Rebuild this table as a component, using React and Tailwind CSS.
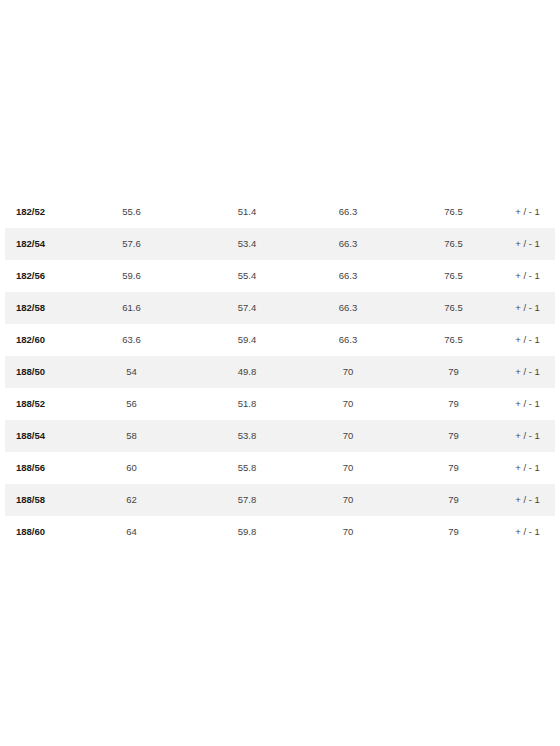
export default function App() {
  const rows = [
    ["182/52", "55.6", "51.4", "66.3", "76.5"],
    ["182/54", "57.6", "53.4", "66.3", "76.5"],
    ["182/56", "59.6", "55.4", "66.3", "76.5"],
    ["182/58", "61.6", "57.4", "66.3", "76.5"],
    ["182/60", "63.6", "59.4", "66.3", "76.5"],
    ["188/50", "54", "49.8", "70", "79"],
    ["188/52", "56", "51.8", "70", "79"],
    ["188/54", "58", "53.8", "70", "79"],
    ["188/56", "60", "55.8", "70", "79"],
    ["188/58", "62", "57.8", "70", "79"],
    ["188/60", "64", "59.8", "70", "79"],
  ];
  return (
    <div className="w-[560px] h-[746px] bg-white pt-[196px] px-[5px]" style={{ fontFamily: '"Liberation Sans", Arial, sans-serif' }}>
      <div className="flex flex-col">
        {rows.map((r, i) => (
          <div
            key={i}
            className={`grid grid-cols-[53px_147px_84px_118px_93px_55px] h-[32px] items-center pt-[1px] text-[9.5px] text-[#444] ${i % 2 === 1 ? "bg-[#f2f2f2]" : "bg-white"}`}
          >
            <div className="pl-[11px] font-bold text-[#1a1a1a]">{r[0]}</div>
            <div className="text-center">{r[1]}</div>
            <div className="text-center">{r[2]}</div>
            <div className="text-center">{r[3]}</div>
            <div className="text-center">{r[4]}</div>
            <div className="text-center whitespace-nowrap">+ / - 1</div>
          </div>
        ))}
      </div>
    </div>
  );
}
